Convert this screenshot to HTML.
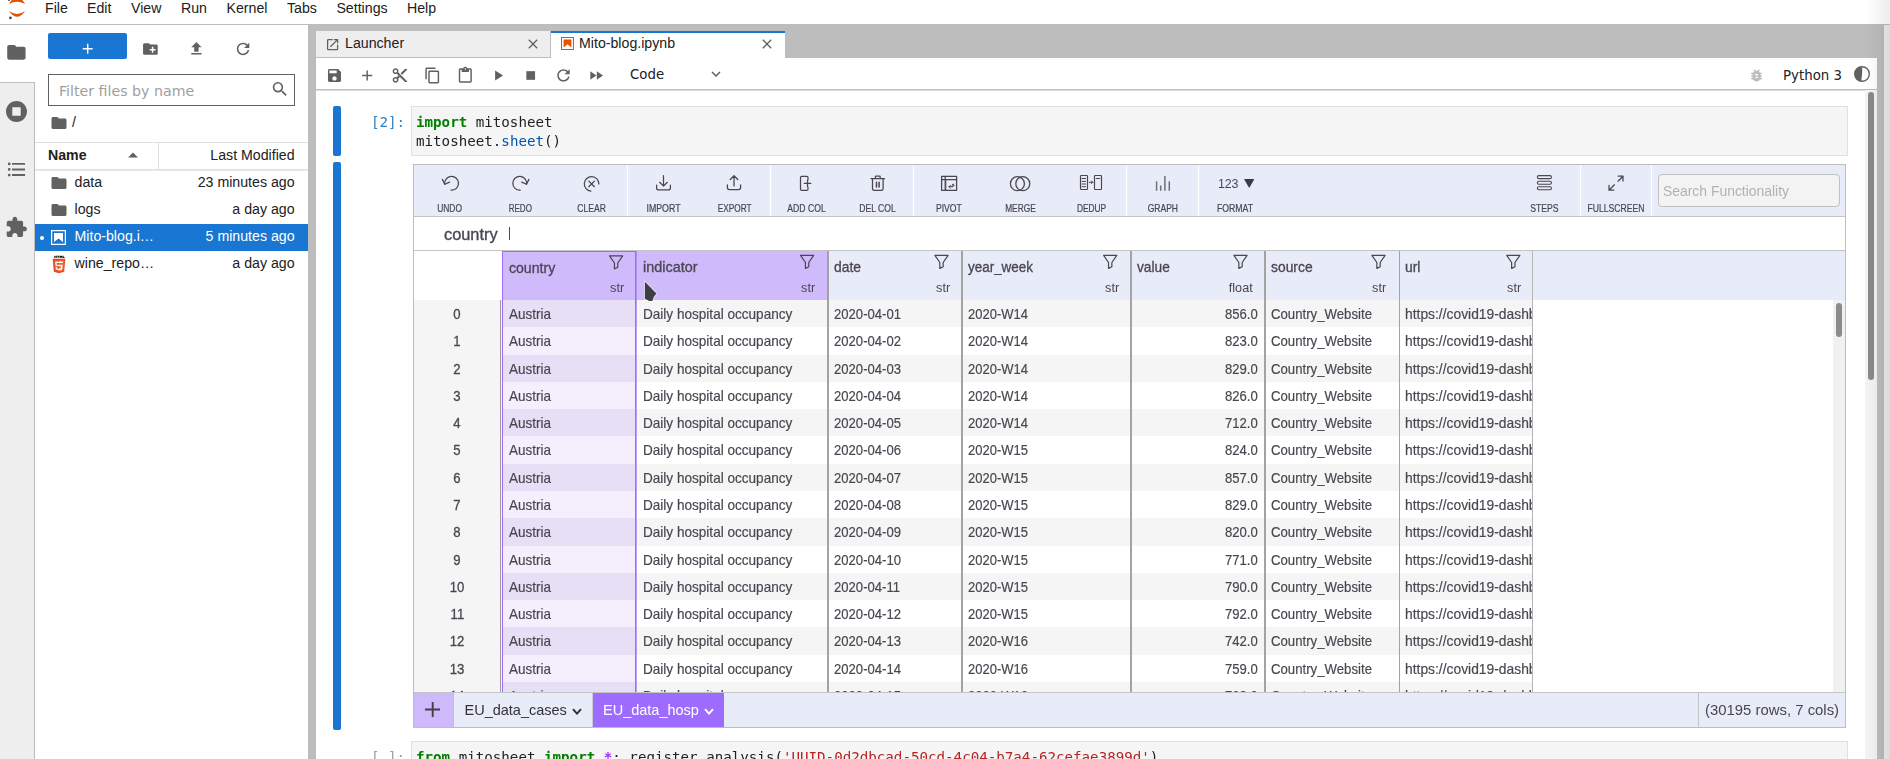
<!DOCTYPE html><html><head><meta charset="utf-8"><title>Mito-blog.ipynb - JupyterLab</title><style>
*{box-sizing:border-box;margin:0;padding:0}
html,body{width:1890px;height:759px;overflow:hidden;background:#fff}
body{position:relative;font-family:"Liberation Sans",sans-serif;font-size:14.18px;color:#212121}
.abs{position:absolute}
#menu{left:0;top:0;width:1890px;height:25px;border-bottom:1px solid #bdbdbd;background:#fff}
#menu span{position:absolute;top:-1px;line-height:18px;font-size:14.18px;color:#212121;white-space:nowrap}
#lside{left:0;top:25px;width:35px;height:734px;background:#eee;border-right:1px solid #bdbdbd}
#lside .act{position:absolute;left:0;top:0;width:35px;height:58px;background:#fff;border-bottom:1px solid #bdbdbd}
#fb{left:35px;top:25px;width:273px;height:734px;background:#fff}
#main{left:308px;top:25px;width:1582px;height:734px;background:#bdbdbd}
#rside{left:1884px;top:25px;width:6px;height:734px;background:#eee}
.tab{position:absolute;top:31px;height:26px;font-size:14.18px;line-height:24px;white-space:nowrap}
#tab1{left:316px;width:235px;background:#eee;border-right:1px solid #bdbdbd;height:26px}
#tab2{left:551px;width:234px;background:#fff;border-top:2px solid #1976d2;height:27px}
#nbpanel{left:316px;top:58px;width:1561px;height:701px;background:#fff}
#tbar{left:316px;top:58px;width:1561px;height:32px;background:#fff;border-bottom:1px solid #bdbdbd;box-shadow:0 1px 1px rgba(0,0,0,.12)}
.mono{will-change:transform;font-family:"DejaVu Sans Mono","Liberation Mono",monospace;font-size:14.18px;line-height:19.3px;white-space:pre}
.k{color:#008000;font-weight:bold}.f{color:#0055aa}.s{color:#ba2121}.o{color:#aa22ff;font-weight:bold}
.inp{position:absolute;background:#f5f5f5;border:1px solid #e0e0e0}
.coll{position:absolute;width:8px;background:#1976d2;border-radius:2px}
.prompt{position:absolute;color:#307fc1}
/* mito */
#mito{will-change:transform;left:413px;top:164px;width:1433px;height:564px;border:1px solid #bdbdbd;background:#fff;overflow:hidden}
.of{font-family:"DejaVu Sans","Liberation Sans",sans-serif;white-space:nowrap}
.tl{font-size:10.6px;line-height:12px;text-align:center;color:#494650;white-space:nowrap}
.hd{font-size:14.3px;line-height:18px;color:#494650;-webkit-text-stroke:.3px #494650;white-space:nowrap}
.ty{font-size:13.6px;line-height:16px;color:#494650;text-align:right;white-space:nowrap}
.dc{font-size:14.3px;line-height:18px;color:#494650;white-space:nowrap;-webkit-text-stroke:.18px #494650}
.sh{font-size:14.5px;line-height:18px;white-space:nowrap}
.cn{display:inline-block;transform-origin:0 50%;white-space:nowrap}
</style></head><body>
<div id="menu" class="abs">
<svg class="abs" style="left:0;top:0" width="40" height="24" viewBox="0 0 40 24"><path d="M9 3.9 Q17.05 -0.2 25.1 3.9 Q17.05 -9.7 9 3.9Z" fill="#e65100"/><path d="M9 11.1 Q17.05 16.9 25.1 11.1 Q17.05 22.6 9 11.1Z" fill="#e65100"/><circle cx="10.4" cy="17.9" r="1.4" fill="#4e4e4e"/><circle cx="9" cy="-0.1" r="1.1" fill="#4e4e4e"/></svg>
<span style="left:45px">File</span>
<span style="left:87px">Edit</span>
<span style="left:131px">View</span>
<span style="left:181px">Run</span>
<span style="left:226.5px">Kernel</span>
<span style="left:287px">Tabs</span>
<span style="left:336.4px">Settings</span>
<span style="left:407px">Help</span>
</div>
<div id="lside" class="abs"><div class="act"></div></div>
<div id="fb" class="abs"></div>
<svg class="abs" style="left:5px;top:41px" width="23" height="23" viewBox="0 0 23 23"><path transform="translate(0.40,0.30) scale(0.9167)" d="M10 4H4c-1.1 0-1.99.9-1.99 2L2 18c0 1.1.9 2 2 2h16c1.1 0 2-.9 2-2V8c0-1.1-.9-2-2-2h-8l-2-2z" fill="#616161"/></svg>
<svg class="abs" style="left:3px;top:98px" width="27" height="27" viewBox="0 0 27 27"><path transform="translate(0.90,0.90) scale(1.0500)" d="M12 2C6.48 2 2 6.48 2 12s4.48 10 10 10 10-4.48 10-10S17.52 2 12 2zm4 14H8V8h8v8z" fill="#616161"/></svg>
<svg class="abs" style="left:5px;top:158px" width="24" height="24" viewBox="0 0 24 24"><path transform="translate(0.50,0.30) scale(0.9292)" d="M7,5H21V7H7V5M7,13V11H21V13H7M4,4.5A1.5,1.5 0 0,1 5.5,6A1.5,1.5 0 0,1 4,7.5A1.5,1.5 0 0,1 2.5,6A1.5,1.5 0 0,1 4,4.5M4,10.5A1.5,1.5 0 0,1 5.5,12A1.5,1.5 0 0,1 4,13.5A1.5,1.5 0 0,1 2.5,12A1.5,1.5 0 0,1 4,10.5M7,19V17H21V19H7M4,16.5A1.5,1.5 0 0,1 5.5,18A1.5,1.5 0 0,1 4,19.5A1.5,1.5 0 0,1 2.5,18A1.5,1.5 0 0,1 4,16.5Z" fill="#616161"/></svg>
<svg class="abs" style="left:4px;top:215px" width="25" height="25" viewBox="0 0 25 25"><path transform="translate(0.80,0.90) scale(0.9625)" d="M20.5 11H19V7c0-1.1-.9-2-2-2h-4V3.5C13 2.12 11.88 1 10.5 1S8 2.12 8 3.5V5H4c-1.1 0-1.99.9-1.99 2v3.8H3.5c1.49 0 2.7 1.21 2.7 2.7s-1.21 2.7-2.7 2.7H2V20c0 1.1.9 2 2 2h3.8v-1.5c0-1.49 1.21-2.7 2.7-2.7 1.49 0 2.7 1.21 2.7 2.7V22H17c1.1 0 2-.9 2-2v-4h1.5c1.38 0 2.5-1.12 2.5-2.5S21.88 11 20.5 11z" fill="#616161"/></svg>
<div class="abs" style="left:48px;top:33px;width:79px;height:26px;background:#1976d2;border-radius:2px"></div>
<svg class="abs" style="left:79px;top:40px" width="18" height="18" viewBox="0 0 18 18"><path transform="translate(0.20,0.20) scale(0.7083)" d="M19 13h-6v6h-2v-6H5v-2h6V5h2v6h6v2z" fill="#fff"/></svg>
<svg class="abs" style="left:141px;top:40px" width="19" height="19" viewBox="0 0 19 19"><path transform="translate(0.60,0.20) scale(0.7333)" d="M20 6h-8l-2-2H4c-1.11 0-1.99.89-1.99 2L2 18c0 1.11.89 2 2 2h16c1.11 0 2-.89 2-2V8c0-1.11-.89-2-2-2zm-1 8h-3v3h-2v-3h-3v-2h3V9h2v3h3v2z" fill="#616161"/></svg>
<svg class="abs" style="left:187px;top:39px" width="19" height="19" viewBox="0 0 19 19"><path transform="translate(0.60,0.90) scale(0.7333)" d="M9 16h6v-6h4l-7-7-7 7h4zm-4 2h14v2H5z" fill="#616161"/></svg>
<svg class="abs" style="left:233px;top:39px" width="20" height="20" viewBox="0 0 20 20"><path transform="translate(0.70,0.60) scale(1.0417)" d="M9 13.5c-2.49 0-4.5-2.01-4.5-4.5S6.51 4.5 9 4.5c1.24 0 2.36.52 3.17 1.33L10 8h5V3l-1.76 1.76C12.15 3.68 10.66 3 9 3 5.69 3 3.01 5.69 3.01 9S5.69 15 9 15c2.97 0 5.43-2.16 5.9-5h-1.52c-.46 2-2.24 3.5-4.38 3.5z" fill="#616161"/></svg>
<div class="abs" style="left:48px;top:74px;width:247px;height:32px;border:1px solid #616161;background:#fff"></div>
<div class="abs of" style="left:59px;top:81px;font-size:14.1px;line-height:20px;color:#9e9e9e"><span class="cn" style="transform:scaleX(1.006)">Filter files by name</span></div>
<svg class="abs" style="left:270px;top:79px" width="21" height="21" viewBox="0 0 21 21"><path transform="translate(0.35,0.60) scale(0.8000)" d="M15.5 14h-.79l-.28-.27A6.471 6.471 0 0 0 16 9.5 6.5 6.5 0 1 0 9.5 16c1.61 0 3.09-.59 4.23-1.57l.27.28v.79l5 4.99L20.49 19l-4.99-5zm-6 0C7.01 14 5 11.99 5 9.5S7.01 5 9.5 5 14 7.01 14 9.5 11.99 14 9.5 14z" fill="#616161"/></svg>
<svg class="abs" style="left:50px;top:114px" width="19" height="19" viewBox="0 0 19 19"><path transform="translate(0.00,0.00) scale(0.7500)" d="M10 4H4c-1.1 0-1.99.9-1.99 2L2 18c0 1.1.9 2 2 2h16c1.1 0 2-.9 2-2V8c0-1.1-.9-2-2-2h-8l-2-2z" fill="#616161"/></svg>
<div class="abs" style="left:72px;top:113px;line-height:18px">/</div>
<div class="abs" style="left:35px;top:142px;width:273px;height:28px;border-top:1px solid #e0e0e0;border-bottom:1px solid #e0e0e0;box-shadow:0 1px 1px rgba(0,0,0,.08)"></div>
<div class="abs" style="left:158px;top:143px;width:1px;height:26px;background:#e0e0e0"></div>
<div class="abs" style="left:48px;top:146px;line-height:18px;font-weight:bold">Name</div>
<svg class="abs" style="left:128px;top:152px" width="10" height="6" viewBox="0 0 10 6"><path d="M0 5.5 L5 0.5 L10 5.5Z" fill="#616161"/></svg>
<div class="abs" style="left:170px;top:146px;width:124.6px;text-align:right;line-height:18px">Last Modified</div>
<svg class="abs" style="left:50px;top:174px" width="19" height="19" viewBox="0 0 19 19"><path transform="translate(0.00,0.00) scale(0.7500)" d="M10 4H4c-1.1 0-1.99.9-1.99 2L2 18c0 1.1.9 2 2 2h16c1.1 0 2-.9 2-2V8c0-1.1-.9-2-2-2h-8l-2-2z" fill="#616161"/></svg>
<div class="abs" style="left:74.5px;top:173px;line-height:18px;color:#212121">data</div>
<div class="abs" style="left:150px;top:173px;width:144.6px;text-align:right;line-height:18px;color:#212121">23 minutes ago</div>
<svg class="abs" style="left:50px;top:201px" width="19" height="19" viewBox="0 0 19 19"><path transform="translate(0.00,0.00) scale(0.7500)" d="M10 4H4c-1.1 0-1.99.9-1.99 2L2 18c0 1.1.9 2 2 2h16c1.1 0 2-.9 2-2V8c0-1.1-.9-2-2-2h-8l-2-2z" fill="#616161"/></svg>
<div class="abs" style="left:74.5px;top:200px;line-height:18px;color:#212121">logs</div>
<div class="abs" style="left:150px;top:200px;width:144.6px;text-align:right;line-height:18px;color:#212121">a day ago</div>
<div class="abs" style="left:35px;top:224px;width:273px;height:27px;background:#1976d2"></div>
<div class="abs" style="left:40px;top:236px;width:4px;height:4px;border-radius:2px;background:#fff"></div>
<svg class="abs" style="left:51px;top:230px" width="15" height="15" viewBox="1.8 1.8 18.4 18.4"><path fill="#fff" d="M18.7 3.3v15.4H3.3V3.3h15.4m1.5-1.5H1.8v18.3h18.3l.1-18.3z"/><path fill="#fff" d="M16.5 16.5l-5.4-4.3-5.6 4.3v-11h11z"/></svg>
<div class="abs" style="left:74.5px;top:227px;line-height:18px;color:#fff">Mito-blog.i…</div>
<div class="abs" style="left:150px;top:227px;width:144.6px;text-align:right;line-height:18px;color:#fff">5 minutes ago</div>
<svg class="abs" style="left:50px;top:254px" width="18" height="20" viewBox="0 0 512 512"><path fill="#e44d26" d="M108 476L76 110h360l-33 366-148 41z"/><path fill="#f16529" d="M256 486l119-33 28-313H256z"/><path fill="#ebebeb" d="M256 276h-60l-4-46h64v-45H143l1 12 11 124h101zm0 117l-50-14-3-36h-45l6 70 92 26z"/><path fill="#fff" d="M256 276v45h55l-5 58-50 14v47l92-26 1-8 11-118 1-12h-13zm0-91v45h108l1-10 2-23 1-12z"/><path fill="#000" d="M124 10h23v22h21V10h23v68h-23V55h-21v23h-23zm97 23h-20V10h63v23h-20v45h-23zm53-23h24l14 24 15-24h24v68h-23V44l-16 24-16-24v34h-22zm88 0h23v46h32v22h-55z" transform="translate(0,10)"/></svg>
<div class="abs" style="left:74.5px;top:254px;line-height:18px;color:#212121">wine_repo…</div>
<div class="abs" style="left:150px;top:254px;width:144.6px;text-align:right;line-height:18px;color:#212121">a day ago</div>
<div id="main" class="abs"></div>
<div id="rside" class="abs"></div>
<div id="tab1" class="tab"><span class="abs" style="left:29px;top:0">Launcher</span></div>
<div id="tab2" class="tab"><span class="abs" style="left:28px;top:-2px">Mito-blog.ipynb</span></div>
<div id="nbpanel" class="abs"></div>
<div id="tbar" class="abs"></div>
<svg class="abs" style="left:325px;top:37px" width="16" height="16" viewBox="0 0 16 16"><path transform="translate(0.10,0.00) scale(0.6250)" d="M19 19H5V5h7V3H5a2 2 0 0 0-2 2v14a2 2 0 0 0 2 2h14c1.1 0 2-.9 2-2v-7h-2v7zM14 3v2h3.59l-9.83 9.83 1.41 1.41L19 6.41V10h2V3h-7z" fill="#616161"/></svg>
<svg class="abs" style="left:525px;top:36px" width="17" height="17" viewBox="0 0 17 17"><path transform="translate(0.00,0.00) scale(0.6667)" d="M19 6.41L17.59 5 12 10.59 6.41 5 5 6.41 10.59 12 5 17.59 6.41 19 12 13.41 17.59 19 19 17.59 13.41 12z" fill="#616161"/></svg>
<svg class="abs" style="left:561px;top:37px" width="13" height="13" viewBox="1.8 1.8 18.4 18.4"><path fill="#e65100" d="M18.7 3.3v15.4H3.3V3.3h15.4m1.5-1.5H1.8v18.3h18.3l.1-18.3z"/><path fill="#e65100" d="M16.5 16.5l-5.4-4.3-5.6 4.3v-11h11z"/></svg>
<svg class="abs" style="left:759px;top:36px" width="17" height="17" viewBox="0 0 17 17"><path transform="translate(0.00,0.00) scale(0.6667)" d="M19 6.41L17.59 5 12 10.59 6.41 5 5 6.41 10.59 12 5 17.59 6.41 19 12 13.41 17.59 19 19 17.59 13.41 12z" fill="#616161"/></svg>
<svg class="abs" style="left:325px;top:66px" width="19" height="19" viewBox="0 0 19 19"><path transform="translate(0.80,0.80) scale(0.7250)" d="M17 3H5c-1.11 0-2 .9-2 2v14c0 1.1.89 2 2 2h14c1.1 0 2-.9 2-2V7l-4-4zm-5 16c-1.66 0-3-1.34-3-3s1.34-3 3-3 3 1.34 3 3-1.34 3-3 3zm3-10H5V5h10v4z" fill="#616161"/></svg>
<svg class="abs" style="left:358px;top:66px" width="19" height="19" viewBox="0 0 19 19"><path transform="translate(0.50,0.80) scale(0.7250)" d="M19 13h-6v6h-2v-6H5v-2h6V5h2v6h6v2z" fill="#616161"/></svg>
<svg class="abs" style="left:391px;top:66px" width="19" height="19" viewBox="0 0 19 19"><path transform="translate(0.20,0.80) scale(0.7250)" d="M9.64 7.64c.23-.5.36-1.05.36-1.64 0-2.21-1.79-4-4-4S2 3.79 2 6s1.79 4 4 4c.59 0 1.14-.13 1.64-.36L10 12l-2.36 2.36C7.14 14.13 6.59 14 6 14c-2.21 0-4 1.79-4 4s1.79 4 4 4 4-1.79 4-4c0-.59-.13-1.14-.36-1.64L12 14l7 7h3v-1L9.64 7.64zM6 8c-1.1 0-2-.89-2-2s.9-2 2-2 2 .89 2 2-.9 2-2 2zm0 12c-1.1 0-2-.89-2-2s.9-2 2-2 2 .89 2 2-.9 2-2 2zm6-7.5c-.28 0-.5-.22-.5-.5s.22-.5.5-.5.5.22.5.5-.22.5-.5.5zM19 3l-6 6 2 2 7-7V3z" fill="#616161"/></svg>
<svg class="abs" style="left:423px;top:66px" width="19" height="19" viewBox="0 0 19 19"><path transform="translate(0.90,0.80) scale(0.7250)" d="M16 1H4c-1.1 0-2 .9-2 2v14h2V3h12V1zm3 4H8c-1.1 0-2 .9-2 2v14c0 1.1.9 2 2 2h11c1.1 0 2-.9 2-2V7c0-1.1-.9-2-2-2zm0 16H8V7h11v14z" fill="#616161"/></svg>
<svg class="abs" style="left:456px;top:66px" width="19" height="19" viewBox="0 0 19 19"><path transform="translate(0.60,0.80) scale(0.7250)" d="M19 2h-4.18C14.4.84 13.3 0 12 0c-1.3 0-2.4.84-2.82 2H5c-1.1 0-2 .9-2 2v16c0 1.1.9 2 2 2h14c1.1 0 2-.9 2-2V4c0-1.1-.9-2-2-2zm-7 0c.55 0 1 .45 1 1s-.45 1-1 1-1-.45-1-1 .45-1 1-1zm7 18H5V4h2v3h10V4h2v16z" fill="#616161"/></svg>
<svg class="abs" style="left:489px;top:66px" width="19" height="19" viewBox="0 0 19 19"><path transform="translate(0.30,0.80) scale(0.7250)" d="M8 5v14l11-7z" fill="#616161"/></svg>
<svg class="abs" style="left:522px;top:66px" width="19" height="19" viewBox="0 0 19 19"><path transform="translate(0.00,0.80) scale(0.7250)" d="M6 6h12v12H6z" fill="#616161"/></svg>
<svg class="abs" style="left:554px;top:66px" width="20" height="20" viewBox="0 0 20 20"><path transform="translate(0.20,0.10) scale(1.0333)" d="M9 13.5c-2.49 0-4.5-2.01-4.5-4.5S6.51 4.5 9 4.5c1.24 0 2.36.52 3.17 1.33L10 8h5V3l-1.76 1.76C12.15 3.68 10.66 3 9 3 5.69 3 3.01 5.69 3.01 9S5.69 15 9 15c2.97 0 5.43-2.16 5.9-5h-1.52c-.46 2-2.24 3.5-4.38 3.5z" fill="#616161"/></svg>
<svg class="abs" style="left:587px;top:66px" width="19" height="19" viewBox="0 0 19 19"><path transform="translate(0.40,0.80) scale(0.7250)" d="M4 18l8.5-6L4 6v12zm9-12v12l8.5-6L13 6z" fill="#616161"/></svg>
<div class="abs of" style="left:629.5px;top:64.4px;font-size:14.1px;line-height:20px;color:#212121"><span class="cn" style="transform:scaleX(.947)">Code</span></div>
<svg class="abs" style="left:707px;top:65px" width="19" height="19" viewBox="0 0 19 19"><path transform="translate(0.00,0.00) scale(0.7500)" d="M16.59 8.59L12 13.17 7.41 8.59 6 10l6 6 6-6z" fill="#616161"/></svg>
<svg class="abs" style="left:1748px;top:67px" width="17" height="17" viewBox="0 0 17 17"><path transform="translate(0.60,0.40) scale(0.6667)" d="M20 8h-2.81a5.985 5.985 0 0 0-1.82-1.96L17 4.41 15.59 3l-2.17 2.17C12.96 5.06 12.49 5 12 5c-.49 0-.96.06-1.41.17L8.41 3 7 4.41l1.62 1.63C7.88 6.55 7.26 7.22 6.81 8H4v2h2.09c-.05.33-.09.66-.09 1v1H4v2h2v1c0 .34.04.67.09 1H4v2h2.81c1.04 1.79 2.97 3 5.19 3s4.15-1.21 5.19-3H20v-2h-2.09c.05-.33.09-.66.09-1v-1h2v-2h-2v-1c0-.34-.04-.67-.09-1H20V8zm-6 8h-4v-2h4v2zm0-4h-4v-2h4v2z" fill="#bdbdbd"/></svg>
<div class="abs of" style="left:1783px;top:65px;font-size:14.1px;line-height:20px;color:#212121"><span class="cn" style="transform:scaleX(.947)">Python 3</span></div>
<svg class="abs" style="left:1853px;top:65px" width="18" height="18" viewBox="0 0 18 18"><circle cx="9" cy="9" r="7.3" fill="#fff" stroke="#616161" stroke-width="1.4"/><path d="M9 1.7 A7.3 7.3 0 0 0 9 16.3 C7.5 15.5 10 9 9 1.7Z" fill="#616161"/></svg>
<div class="abs" style="left:1865px;top:90px;width:12px;height:669px;background:#f3f3f3"></div>
<div class="abs" style="left:1868px;top:92px;width:6px;height:288px;background:#8a8a8a;border-radius:3px"></div>
<div class="coll" style="left:333px;top:106px;height:50px"></div>
<div class="prompt mono" style="left:370.6px;top:113px">[2]:</div>
<div class="inp" style="left:411px;top:106px;width:1437px;height:50px"></div>
<div class="abs mono" style="left:416.4px;top:113px"><span class="k">import</span> mitosheet
mitosheet<span class="o" style="font-weight:normal;color:#212121">.</span><span class="f">sheet</span>()</div>
<div class="coll" style="left:333px;top:162px;height:568px"></div>
<div id="mito" class="abs"><div class="abs" style="left:0;top:0;width:1431px;height:52px;background:#e8ebf8;border-bottom:1px solid #c4c4c4"></div>
<div class="abs" style="left:213px;top:0;width:1px;height:51px;background:#fff;box-shadow:0 0 0 .25px rgba(255,255,255,.5)"></div>
<div class="abs" style="left:356px;top:0;width:1px;height:51px;background:#fff;box-shadow:0 0 0 .25px rgba(255,255,255,.5)"></div>
<div class="abs" style="left:499px;top:0;width:1px;height:51px;background:#fff;box-shadow:0 0 0 .25px rgba(255,255,255,.5)"></div>
<div class="abs" style="left:712px;top:0;width:1px;height:51px;background:#fff;box-shadow:0 0 0 .25px rgba(255,255,255,.5)"></div>
<div class="abs" style="left:784px;top:0;width:1px;height:51px;background:#fff;box-shadow:0 0 0 .25px rgba(255,255,255,.5)"></div>
<div class="abs" style="left:1166px;top:0;width:1px;height:51px;background:#fff;box-shadow:0 0 0 .25px rgba(255,255,255,.5)"></div>
<div class="abs" style="left:1237px;top:0;width:1px;height:51px;background:#fff;box-shadow:0 0 0 .25px rgba(255,255,255,.5)"></div>
<div class="abs tl" style="left:-14.0px;top:37px;width:100px"><span style="display:inline-block;transform:scaleX(0.798);-webkit-text-stroke:.2px #494650">UNDO</span></div>
<div class="abs tl" style="left:56.59999999999991px;top:37px;width:100px"><span style="display:inline-block;transform:scaleX(0.761);-webkit-text-stroke:.2px #494650">REDO</span></div>
<div class="abs tl" style="left:127.89999999999998px;top:37px;width:100px"><span style="display:inline-block;transform:scaleX(0.809);-webkit-text-stroke:.2px #494650">CLEAR</span></div>
<div class="abs tl" style="left:199.89999999999998px;top:37px;width:100px"><span style="display:inline-block;transform:scaleX(0.831);-webkit-text-stroke:.2px #494650">IMPORT</span></div>
<div class="abs tl" style="left:270.30000000000007px;top:37px;width:100px"><span style="display:inline-block;transform:scaleX(0.778);-webkit-text-stroke:.2px #494650">EXPORT</span></div>
<div class="abs tl" style="left:342.1px;top:37px;width:100px"><span style="display:inline-block;transform:scaleX(0.815);-webkit-text-stroke:.2px #494650">ADD COL</span></div>
<div class="abs tl" style="left:413.79999999999995px;top:37px;width:100px"><span style="display:inline-block;transform:scaleX(0.809);-webkit-text-stroke:.2px #494650">DEL COL</span></div>
<div class="abs tl" style="left:485.0999999999999px;top:37px;width:100px"><span style="display:inline-block;transform:scaleX(0.817);-webkit-text-stroke:.2px #494650">PIVOT</span></div>
<div class="abs tl" style="left:556.4px;top:37px;width:100px"><span style="display:inline-block;transform:scaleX(0.785);-webkit-text-stroke:.2px #494650">MERGE</span></div>
<div class="abs tl" style="left:627.6999999999998px;top:37px;width:100px"><span style="display:inline-block;transform:scaleX(0.79);-webkit-text-stroke:.2px #494650">DEDUP</span></div>
<div class="abs tl" style="left:699.0px;top:37px;width:100px"><span style="display:inline-block;transform:scaleX(0.806);-webkit-text-stroke:.2px #494650">GRAPH</span></div>
<div class="abs" style="left:803.5px;top:11px;font-size:12.8px;line-height:15px;color:#494650;letter-spacing:-.2px"><span class="cn" style="transform:scaleX(.97)">123</span></div>
<svg class="abs" style="left:829.5999999999999px;top:14px" width="10.4" height="9" viewBox="0 0 10.4 9"><path d="M0 0 H10.4 L5.2 9Z" fill="#3d3a45"/></svg>
<div class="abs tl" style="left:771.0px;top:37px;width:100px"><span style="display:inline-block;transform:scaleX(0.823);-webkit-text-stroke:.2px #494650">FORMAT</span></div>
<div class="abs tl" style="left:1080px;top:37px;width:100px"><span style="display:inline-block;transform:scaleX(0.814);-webkit-text-stroke:.2px #494650">STEPS</span></div>
<div class="abs tl" style="left:1152px;top:37px;width:100px"><span style="display:inline-block;transform:scaleX(0.812);-webkit-text-stroke:.2px #494650">FULLSCREEN</span></div>
<svg class="abs" style="left:0;top:0" width="1431" height="52" viewBox="0 0 1431 52" fill="none" stroke="#494650" stroke-width="1.25" stroke-linecap="round" stroke-linejoin="round"><g transform="translate(37.60,18.30)"><path d="M-6.83 0.96 A6.9 6.9 0 1 1 -0.48 6.88"/><path d="M-9.23 -3.94 L-6.83 0.96 L-2.03 -1.24"/></g><g transform="translate(105.70,18.30)"><g transform="scale(-1,1)"><path d="M-6.83 0.96 A6.9 6.9 0 1 1 -0.48 6.88"/><path d="M-9.23 -3.94 L-6.83 0.96 L-2.03 -1.24"/></g></g><g transform="translate(177.60,18.90)"><path d="M7.30 0.00 A7.3 7.3 0 1 0 -0.76 7.26"/><path d="M-2.8 -2.8 L2.8 2.8 M2.8 -2.8 L-2.8 2.8"/></g><g transform="translate(249.50,18.30)"><path d="M0 -7.6 V2.8 M-3.8 -1 L0 2.8 L3.8 -1"/><path d="M-6.9 1.8 V4.6 a2 2 0 0 0 2 2 H4.9 a2 2 0 0 0 2 -2 V1.8"/></g><g transform="translate(320.00,18.30)"><path d="M0 2.6 V-7.6 M-3.8 -3.8 L0 -7.6 L3.8 -3.8"/><path d="M-6.6 1.6 V4.2 a2 2 0 0 0 2 2 H4.6 a2 2 0 0 0 2 -2 V1.6"/></g><g transform="translate(390.50,18.40)"><path d="M3.5 -3.9 V-5.8 a1.2 1.2 0 0 0 -1.2 -1.2 H-2.8 a1.2 1.2 0 0 0 -1.2 1.2 V5.8 a1.2 1.2 0 0 0 1.2 1.2 H2.3 a1.2 1.2 0 0 0 1.2 -1.2 V3.9"/><path d="M-0.2 0 H6.3 M3.05 -3.25 V3.25"/></g><g transform="translate(463.80,18.30)"><path d="M-6.8 -4.7 H6.8 M-2.4 -4.7 V-6.6 a.5 .5 0 0 1 .5 -.5 H1.9 a.5 .5 0 0 1 .5 .5 V-4.7"/><path d="M-5.3 -4.7 V5.4 a1.7 1.7 0 0 0 1.7 1.7 H3.6 a1.7 1.7 0 0 0 1.7 -1.7 V-4.7"/><path d="M-1.3 -1 V3.7 M1.3 -1 V3.7" stroke-width="1.5"/></g><g transform="translate(535.10,18.30)"><rect x="-7.5" y="-6.8" width="15" height="13.8"/><path d="M-7.5 -3.7 H7.5 M-3.9 -6.8 V7" /><path d="M-3.2 -3.7 V7" stroke-width=".8"/><path d="M0 3.4 H4 V1 M0 3.4 l1.3 -1.3 M0 3.4 l1.3 1.3 M4 1 l-1.2 1.2 M4 1 l1.2 1.2" stroke-width="1"/></g><g transform="translate(606.40,18.30)"><circle cx="-3" cy=".4" r="7"/><circle cx="2.4" cy=".4" r="7"/></g><g transform="translate(677.00,18.00)"><g stroke-width="1.15"><rect x="-10.5" y="-7.5" width="7" height="14" rx=".8"/><path d="M-9 -4.5 H-5.4 M-9 -1.6 H-5.4 M-9 1 H-5.4 M-9 3.7 H-5.4" stroke-width="1"/><path d="M-1.7 -.7 H1.8 M.5 -2 L1.8 -.7 L.5 .6" stroke-width="1"/><rect x="3.5" y="-7.5" width="7" height="14" rx=".8"/><path d="M5.2 -4.5 H8.8" stroke-width="1"/></g></g><g transform="translate(741.00,9.00)"><path d="M1.6 7.2 V16.8 M5.7 11.5 V16.8 M9.9 2 V16.8 M14.3 7.2 V16.8" stroke="#716f78" stroke-width="1.5" stroke-linecap="butt"/></g><g transform="translate(1130.40,17.70)"><g stroke-width="1.1"><rect x="-7.05" y="-7.05" width="14.1" height="3" rx="1.5"/><rect x="-7.05" y="-1.5" width="14.1" height="3" rx="1.5"/><rect x="-7.05" y="4.05" width="14.1" height="3" rx="1.5"/></g></g><g transform="translate(1202.00,18.20)"><path d="M-1.6 1.6 L-7 7 M-7 2.2 V7 H-2.2 M2 -2 L7 -7 M2.2 -7 H7 V-2.2" /></g></svg>
<div class="abs" style="left:1244px;top:9px;width:182px;height:33px;border:1px solid #c0c0c0;border-radius:4px;background:#f3f3f3"></div>
<div class="abs" style="left:1249.4px;top:16px;font-size:15px;line-height:20px;color:#b2b2b2"><span class="cn" style="transform:scaleX(.927)">Search Functionality</span></div>
<div class="abs" style="left:0;top:53px;width:1431px;height:33px;background:#fff;border-bottom:1px solid #c4c4c4"></div>
<div class="abs" style="left:30px;top:59px;font-size:16.5px;line-height:20px;color:#494650;-webkit-text-stroke:.35px #494650"><span class="cn" style="transform:scaleX(.99)">country</span></div>
<div class="abs" style="left:95px;top:62px;width:1px;height:13px;background:#494650"></div>
<div class="abs" style="left:0;top:86px;width:88px;height:49px;background:#fff"></div>
<div class="abs" style="left:88px;top:86px;width:1343px;height:49px;background:#e8ebf8"></div>
<div class="abs" style="left:0;top:135.00px;width:1118px;height:27.58px;background:#f5f5f5"></div>
<div class="abs" style="left:88px;top:135.00px;width:134px;height:27.58px;background:#e7dff5"></div>
<div class="abs" style="left:0;top:162.28px;width:1118px;height:27.58px;background:#fff"></div>
<div class="abs" style="left:88px;top:162.28px;width:134px;height:27.58px;background:#f5effd"></div>
<div class="abs" style="left:0;top:189.56px;width:1118px;height:27.58px;background:#f5f5f5"></div>
<div class="abs" style="left:88px;top:189.56px;width:134px;height:27.58px;background:#e7dff5"></div>
<div class="abs" style="left:0;top:216.84px;width:1118px;height:27.58px;background:#fff"></div>
<div class="abs" style="left:88px;top:216.84px;width:134px;height:27.58px;background:#f5effd"></div>
<div class="abs" style="left:0;top:244.12px;width:1118px;height:27.58px;background:#f5f5f5"></div>
<div class="abs" style="left:88px;top:244.12px;width:134px;height:27.58px;background:#e7dff5"></div>
<div class="abs" style="left:0;top:271.40px;width:1118px;height:27.58px;background:#fff"></div>
<div class="abs" style="left:88px;top:271.40px;width:134px;height:27.58px;background:#f5effd"></div>
<div class="abs" style="left:0;top:298.68px;width:1118px;height:27.58px;background:#f5f5f5"></div>
<div class="abs" style="left:88px;top:298.68px;width:134px;height:27.58px;background:#e7dff5"></div>
<div class="abs" style="left:0;top:325.96px;width:1118px;height:27.58px;background:#fff"></div>
<div class="abs" style="left:88px;top:325.96px;width:134px;height:27.58px;background:#f5effd"></div>
<div class="abs" style="left:0;top:353.24px;width:1118px;height:27.58px;background:#f5f5f5"></div>
<div class="abs" style="left:88px;top:353.24px;width:134px;height:27.58px;background:#e7dff5"></div>
<div class="abs" style="left:0;top:380.52px;width:1118px;height:27.58px;background:#fff"></div>
<div class="abs" style="left:88px;top:380.52px;width:134px;height:27.58px;background:#f5effd"></div>
<div class="abs" style="left:0;top:407.80px;width:1118px;height:27.58px;background:#f5f5f5"></div>
<div class="abs" style="left:88px;top:407.80px;width:134px;height:27.58px;background:#e7dff5"></div>
<div class="abs" style="left:0;top:435.08px;width:1118px;height:27.58px;background:#fff"></div>
<div class="abs" style="left:88px;top:435.08px;width:134px;height:27.58px;background:#f5effd"></div>
<div class="abs" style="left:0;top:462.36px;width:1118px;height:27.58px;background:#f5f5f5"></div>
<div class="abs" style="left:88px;top:462.36px;width:134px;height:27.58px;background:#e7dff5"></div>
<div class="abs" style="left:0;top:489.64px;width:1118px;height:27.58px;background:#fff"></div>
<div class="abs" style="left:88px;top:489.64px;width:134px;height:27.58px;background:#f5effd"></div>
<div class="abs" style="left:0;top:516.92px;width:1118px;height:27.58px;background:#f5f5f5"></div>
<div class="abs" style="left:88px;top:516.92px;width:134px;height:27.58px;background:#e7dff5"></div>
<div class="abs" style="left:0;top:135px;width:88px;height:393px;background:#f5f5f5"></div>
<div class="abs" style="left:88px;top:86px;width:325px;height:49px;background:#cfbafc"></div>
<div class="abs hd" style="left:94.7px;top:94px"><span class="cn" style="transform:scaleX(0.985)">country</span></div>
<div class="abs ty" style="left:160.0px;top:115.19999999999999px;width:50px"><span class="cn" style="transform:scaleX(.93);transform-origin:100% 50%">str</span></div>
<div class="abs hd" style="left:228.7px;top:93px"><span class="cn" style="transform:scaleX(1.01)">indicator</span></div>
<div class="abs ty" style="left:351.5px;top:114.6px;width:50px"><span class="cn" style="transform:scaleX(.93);transform-origin:100% 50%">str</span></div>
<div class="abs hd" style="left:420.2px;top:93px"><span class="cn" style="transform:scaleX(0.97)">date</span></div>
<div class="abs ty" style="left:486.0px;top:114.6px;width:50px"><span class="cn" style="transform:scaleX(.93);transform-origin:100% 50%">str</span></div>
<div class="abs hd" style="left:554.2px;top:93px"><span class="cn" style="transform:scaleX(0.94)">year_week</span></div>
<div class="abs ty" style="left:655.5px;top:114.6px;width:50px"><span class="cn" style="transform:scaleX(.93);transform-origin:100% 50%">str</span></div>
<div class="abs hd" style="left:723.2px;top:93px"><span class="cn" style="transform:scaleX(0.96)">value</span></div>
<div class="abs ty" style="left:788.8px;top:114.6px;width:50px"><span class="cn" style="transform:scaleX(.93);transform-origin:100% 50%">float</span></div>
<div class="abs hd" style="left:857.2px;top:93px"><span class="cn" style="transform:scaleX(0.97)">source</span></div>
<div class="abs ty" style="left:922.5px;top:114.6px;width:50px"><span class="cn" style="transform:scaleX(.93);transform-origin:100% 50%">str</span></div>
<div class="abs hd" style="left:991.2px;top:93px"><span class="cn" style="transform:scaleX(0.97)">url</span></div>
<div class="abs ty" style="left:1057.5px;top:114.6px;width:50px"><span class="cn" style="transform:scaleX(.93);transform-origin:100% 50%">str</span></div>
<svg class="abs" style="left:0;top:86px" width="1431" height="49" viewBox="0 0 1431 49"><g transform="translate(194.80,4.1) scale(1.043)"><path d="M.7 .7 H13.3 L8.6 7.6 V11.6 L5.4 13.2 V7.6 Z" fill="none" stroke="#494650" stroke-width="1.15" stroke-linejoin="round"/></g><g transform="translate(385.80,3.6) scale(1.043)"><path d="M.7 .7 H13.3 L8.6 7.6 V11.6 L5.4 13.2 V7.6 Z" fill="none" stroke="#494650" stroke-width="1.15" stroke-linejoin="round"/></g><g transform="translate(520.20,3.6) scale(1.043)"><path d="M.7 .7 H13.3 L8.6 7.6 V11.6 L5.4 13.2 V7.6 Z" fill="none" stroke="#494650" stroke-width="1.15" stroke-linejoin="round"/></g><g transform="translate(688.90,3.6) scale(1.043)"><path d="M.7 .7 H13.3 L8.6 7.6 V11.6 L5.4 13.2 V7.6 Z" fill="none" stroke="#494650" stroke-width="1.15" stroke-linejoin="round"/></g><g transform="translate(819.20,3.6) scale(1.043)"><path d="M.7 .7 H13.3 L8.6 7.6 V11.6 L5.4 13.2 V7.6 Z" fill="none" stroke="#494650" stroke-width="1.15" stroke-linejoin="round"/></g><g transform="translate(957.20,3.6) scale(1.043)"><path d="M.7 .7 H13.3 L8.6 7.6 V11.6 L5.4 13.2 V7.6 Z" fill="none" stroke="#494650" stroke-width="1.15" stroke-linejoin="round"/></g><g transform="translate(1092.00,3.6) scale(1.043)"><path d="M.7 .7 H13.3 L8.6 7.6 V11.6 L5.4 13.2 V7.6 Z" fill="none" stroke="#494650" stroke-width="1.15" stroke-linejoin="round"/></g></svg>
<div class="abs dc" style="left:0;top:140.05px;width:86px;text-align:center;-webkit-text-stroke:.3px #494650"><span style="display:inline-block;transform:scaleX(.92)">0</span></div>
<div class="abs dc" style="left:95.0px;top:140.05px;"><span class="cn" style="transform:scaleX(0.944)">Austria</span></div>
<div class="abs dc" style="left:229.3px;top:140.05px;"><span class="cn" style="transform:scaleX(0.949)">Daily hospital occupancy</span></div>
<div class="abs dc" style="left:420.3px;top:140.05px;"><span class="cn" style="transform:scaleX(0.916)">2020-04-01</span></div>
<div class="abs dc" style="left:554.3px;top:140.05px;"><span class="cn" style="transform:scaleX(0.908)">2020-W14</span></div>
<div class="abs dc" style="left:743.6px;top:140.05px;width:100px;text-align:right"><span class="cn" style="transform:scaleX(0.917);transform-origin:100% 50%">856.0</span></div>
<div class="abs dc" style="left:857.3px;top:140.05px;"><span class="cn" style="transform:scaleX(0.923)">Country_Website</span></div>
<div class="abs dc" style="left:991.0px;top:140.05px;width:126.5px;overflow:hidden;"><span class="cn" style="transform:scaleX(0.968)">https://covid19-dashboard.ages.at/</span></div>
<div class="abs dc" style="left:0;top:167.33px;width:86px;text-align:center;-webkit-text-stroke:.3px #494650"><span style="display:inline-block;transform:scaleX(.92)">1</span></div>
<div class="abs dc" style="left:95.0px;top:167.33px;"><span class="cn" style="transform:scaleX(0.944)">Austria</span></div>
<div class="abs dc" style="left:229.3px;top:167.33px;"><span class="cn" style="transform:scaleX(0.949)">Daily hospital occupancy</span></div>
<div class="abs dc" style="left:420.3px;top:167.33px;"><span class="cn" style="transform:scaleX(0.916)">2020-04-02</span></div>
<div class="abs dc" style="left:554.3px;top:167.33px;"><span class="cn" style="transform:scaleX(0.908)">2020-W14</span></div>
<div class="abs dc" style="left:743.6px;top:167.33px;width:100px;text-align:right"><span class="cn" style="transform:scaleX(0.917);transform-origin:100% 50%">823.0</span></div>
<div class="abs dc" style="left:857.3px;top:167.33px;"><span class="cn" style="transform:scaleX(0.923)">Country_Website</span></div>
<div class="abs dc" style="left:991.0px;top:167.33px;width:126.5px;overflow:hidden;"><span class="cn" style="transform:scaleX(0.968)">https://covid19-dashboard.ages.at/</span></div>
<div class="abs dc" style="left:0;top:194.61px;width:86px;text-align:center;-webkit-text-stroke:.3px #494650"><span style="display:inline-block;transform:scaleX(.92)">2</span></div>
<div class="abs dc" style="left:95.0px;top:194.61px;"><span class="cn" style="transform:scaleX(0.944)">Austria</span></div>
<div class="abs dc" style="left:229.3px;top:194.61px;"><span class="cn" style="transform:scaleX(0.949)">Daily hospital occupancy</span></div>
<div class="abs dc" style="left:420.3px;top:194.61px;"><span class="cn" style="transform:scaleX(0.916)">2020-04-03</span></div>
<div class="abs dc" style="left:554.3px;top:194.61px;"><span class="cn" style="transform:scaleX(0.908)">2020-W14</span></div>
<div class="abs dc" style="left:743.6px;top:194.61px;width:100px;text-align:right"><span class="cn" style="transform:scaleX(0.917);transform-origin:100% 50%">829.0</span></div>
<div class="abs dc" style="left:857.3px;top:194.61px;"><span class="cn" style="transform:scaleX(0.923)">Country_Website</span></div>
<div class="abs dc" style="left:991.0px;top:194.61px;width:126.5px;overflow:hidden;"><span class="cn" style="transform:scaleX(0.968)">https://covid19-dashboard.ages.at/</span></div>
<div class="abs dc" style="left:0;top:221.89px;width:86px;text-align:center;-webkit-text-stroke:.3px #494650"><span style="display:inline-block;transform:scaleX(.92)">3</span></div>
<div class="abs dc" style="left:95.0px;top:221.89px;"><span class="cn" style="transform:scaleX(0.944)">Austria</span></div>
<div class="abs dc" style="left:229.3px;top:221.89px;"><span class="cn" style="transform:scaleX(0.949)">Daily hospital occupancy</span></div>
<div class="abs dc" style="left:420.3px;top:221.89px;"><span class="cn" style="transform:scaleX(0.916)">2020-04-04</span></div>
<div class="abs dc" style="left:554.3px;top:221.89px;"><span class="cn" style="transform:scaleX(0.908)">2020-W14</span></div>
<div class="abs dc" style="left:743.6px;top:221.89px;width:100px;text-align:right"><span class="cn" style="transform:scaleX(0.917);transform-origin:100% 50%">826.0</span></div>
<div class="abs dc" style="left:857.3px;top:221.89px;"><span class="cn" style="transform:scaleX(0.923)">Country_Website</span></div>
<div class="abs dc" style="left:991.0px;top:221.89px;width:126.5px;overflow:hidden;"><span class="cn" style="transform:scaleX(0.968)">https://covid19-dashboard.ages.at/</span></div>
<div class="abs dc" style="left:0;top:249.17px;width:86px;text-align:center;-webkit-text-stroke:.3px #494650"><span style="display:inline-block;transform:scaleX(.92)">4</span></div>
<div class="abs dc" style="left:95.0px;top:249.17px;"><span class="cn" style="transform:scaleX(0.944)">Austria</span></div>
<div class="abs dc" style="left:229.3px;top:249.17px;"><span class="cn" style="transform:scaleX(0.949)">Daily hospital occupancy</span></div>
<div class="abs dc" style="left:420.3px;top:249.17px;"><span class="cn" style="transform:scaleX(0.916)">2020-04-05</span></div>
<div class="abs dc" style="left:554.3px;top:249.17px;"><span class="cn" style="transform:scaleX(0.908)">2020-W14</span></div>
<div class="abs dc" style="left:743.6px;top:249.17px;width:100px;text-align:right"><span class="cn" style="transform:scaleX(0.917);transform-origin:100% 50%">712.0</span></div>
<div class="abs dc" style="left:857.3px;top:249.17px;"><span class="cn" style="transform:scaleX(0.923)">Country_Website</span></div>
<div class="abs dc" style="left:991.0px;top:249.17px;width:126.5px;overflow:hidden;"><span class="cn" style="transform:scaleX(0.968)">https://covid19-dashboard.ages.at/</span></div>
<div class="abs dc" style="left:0;top:276.45px;width:86px;text-align:center;-webkit-text-stroke:.3px #494650"><span style="display:inline-block;transform:scaleX(.92)">5</span></div>
<div class="abs dc" style="left:95.0px;top:276.45px;"><span class="cn" style="transform:scaleX(0.944)">Austria</span></div>
<div class="abs dc" style="left:229.3px;top:276.45px;"><span class="cn" style="transform:scaleX(0.949)">Daily hospital occupancy</span></div>
<div class="abs dc" style="left:420.3px;top:276.45px;"><span class="cn" style="transform:scaleX(0.916)">2020-04-06</span></div>
<div class="abs dc" style="left:554.3px;top:276.45px;"><span class="cn" style="transform:scaleX(0.908)">2020-W15</span></div>
<div class="abs dc" style="left:743.6px;top:276.45px;width:100px;text-align:right"><span class="cn" style="transform:scaleX(0.917);transform-origin:100% 50%">824.0</span></div>
<div class="abs dc" style="left:857.3px;top:276.45px;"><span class="cn" style="transform:scaleX(0.923)">Country_Website</span></div>
<div class="abs dc" style="left:991.0px;top:276.45px;width:126.5px;overflow:hidden;"><span class="cn" style="transform:scaleX(0.968)">https://covid19-dashboard.ages.at/</span></div>
<div class="abs dc" style="left:0;top:303.73px;width:86px;text-align:center;-webkit-text-stroke:.3px #494650"><span style="display:inline-block;transform:scaleX(.92)">6</span></div>
<div class="abs dc" style="left:95.0px;top:303.73px;"><span class="cn" style="transform:scaleX(0.944)">Austria</span></div>
<div class="abs dc" style="left:229.3px;top:303.73px;"><span class="cn" style="transform:scaleX(0.949)">Daily hospital occupancy</span></div>
<div class="abs dc" style="left:420.3px;top:303.73px;"><span class="cn" style="transform:scaleX(0.916)">2020-04-07</span></div>
<div class="abs dc" style="left:554.3px;top:303.73px;"><span class="cn" style="transform:scaleX(0.908)">2020-W15</span></div>
<div class="abs dc" style="left:743.6px;top:303.73px;width:100px;text-align:right"><span class="cn" style="transform:scaleX(0.917);transform-origin:100% 50%">857.0</span></div>
<div class="abs dc" style="left:857.3px;top:303.73px;"><span class="cn" style="transform:scaleX(0.923)">Country_Website</span></div>
<div class="abs dc" style="left:991.0px;top:303.73px;width:126.5px;overflow:hidden;"><span class="cn" style="transform:scaleX(0.968)">https://covid19-dashboard.ages.at/</span></div>
<div class="abs dc" style="left:0;top:331.01px;width:86px;text-align:center;-webkit-text-stroke:.3px #494650"><span style="display:inline-block;transform:scaleX(.92)">7</span></div>
<div class="abs dc" style="left:95.0px;top:331.01px;"><span class="cn" style="transform:scaleX(0.944)">Austria</span></div>
<div class="abs dc" style="left:229.3px;top:331.01px;"><span class="cn" style="transform:scaleX(0.949)">Daily hospital occupancy</span></div>
<div class="abs dc" style="left:420.3px;top:331.01px;"><span class="cn" style="transform:scaleX(0.916)">2020-04-08</span></div>
<div class="abs dc" style="left:554.3px;top:331.01px;"><span class="cn" style="transform:scaleX(0.908)">2020-W15</span></div>
<div class="abs dc" style="left:743.6px;top:331.01px;width:100px;text-align:right"><span class="cn" style="transform:scaleX(0.917);transform-origin:100% 50%">829.0</span></div>
<div class="abs dc" style="left:857.3px;top:331.01px;"><span class="cn" style="transform:scaleX(0.923)">Country_Website</span></div>
<div class="abs dc" style="left:991.0px;top:331.01px;width:126.5px;overflow:hidden;"><span class="cn" style="transform:scaleX(0.968)">https://covid19-dashboard.ages.at/</span></div>
<div class="abs dc" style="left:0;top:358.29px;width:86px;text-align:center;-webkit-text-stroke:.3px #494650"><span style="display:inline-block;transform:scaleX(.92)">8</span></div>
<div class="abs dc" style="left:95.0px;top:358.29px;"><span class="cn" style="transform:scaleX(0.944)">Austria</span></div>
<div class="abs dc" style="left:229.3px;top:358.29px;"><span class="cn" style="transform:scaleX(0.949)">Daily hospital occupancy</span></div>
<div class="abs dc" style="left:420.3px;top:358.29px;"><span class="cn" style="transform:scaleX(0.916)">2020-04-09</span></div>
<div class="abs dc" style="left:554.3px;top:358.29px;"><span class="cn" style="transform:scaleX(0.908)">2020-W15</span></div>
<div class="abs dc" style="left:743.6px;top:358.29px;width:100px;text-align:right"><span class="cn" style="transform:scaleX(0.917);transform-origin:100% 50%">820.0</span></div>
<div class="abs dc" style="left:857.3px;top:358.29px;"><span class="cn" style="transform:scaleX(0.923)">Country_Website</span></div>
<div class="abs dc" style="left:991.0px;top:358.29px;width:126.5px;overflow:hidden;"><span class="cn" style="transform:scaleX(0.968)">https://covid19-dashboard.ages.at/</span></div>
<div class="abs dc" style="left:0;top:385.57px;width:86px;text-align:center;-webkit-text-stroke:.3px #494650"><span style="display:inline-block;transform:scaleX(.92)">9</span></div>
<div class="abs dc" style="left:95.0px;top:385.57px;"><span class="cn" style="transform:scaleX(0.944)">Austria</span></div>
<div class="abs dc" style="left:229.3px;top:385.57px;"><span class="cn" style="transform:scaleX(0.949)">Daily hospital occupancy</span></div>
<div class="abs dc" style="left:420.3px;top:385.57px;"><span class="cn" style="transform:scaleX(0.916)">2020-04-10</span></div>
<div class="abs dc" style="left:554.3px;top:385.57px;"><span class="cn" style="transform:scaleX(0.908)">2020-W15</span></div>
<div class="abs dc" style="left:743.6px;top:385.57px;width:100px;text-align:right"><span class="cn" style="transform:scaleX(0.917);transform-origin:100% 50%">771.0</span></div>
<div class="abs dc" style="left:857.3px;top:385.57px;"><span class="cn" style="transform:scaleX(0.923)">Country_Website</span></div>
<div class="abs dc" style="left:991.0px;top:385.57px;width:126.5px;overflow:hidden;"><span class="cn" style="transform:scaleX(0.968)">https://covid19-dashboard.ages.at/</span></div>
<div class="abs dc" style="left:0;top:412.85px;width:86px;text-align:center;-webkit-text-stroke:.3px #494650"><span style="display:inline-block;transform:scaleX(.92)">10</span></div>
<div class="abs dc" style="left:95.0px;top:412.85px;"><span class="cn" style="transform:scaleX(0.944)">Austria</span></div>
<div class="abs dc" style="left:229.3px;top:412.85px;"><span class="cn" style="transform:scaleX(0.949)">Daily hospital occupancy</span></div>
<div class="abs dc" style="left:420.3px;top:412.85px;"><span class="cn" style="transform:scaleX(0.916)">2020-04-11</span></div>
<div class="abs dc" style="left:554.3px;top:412.85px;"><span class="cn" style="transform:scaleX(0.908)">2020-W15</span></div>
<div class="abs dc" style="left:743.6px;top:412.85px;width:100px;text-align:right"><span class="cn" style="transform:scaleX(0.917);transform-origin:100% 50%">790.0</span></div>
<div class="abs dc" style="left:857.3px;top:412.85px;"><span class="cn" style="transform:scaleX(0.923)">Country_Website</span></div>
<div class="abs dc" style="left:991.0px;top:412.85px;width:126.5px;overflow:hidden;"><span class="cn" style="transform:scaleX(0.968)">https://covid19-dashboard.ages.at/</span></div>
<div class="abs dc" style="left:0;top:440.13px;width:86px;text-align:center;-webkit-text-stroke:.3px #494650"><span style="display:inline-block;transform:scaleX(.92)">11</span></div>
<div class="abs dc" style="left:95.0px;top:440.13px;"><span class="cn" style="transform:scaleX(0.944)">Austria</span></div>
<div class="abs dc" style="left:229.3px;top:440.13px;"><span class="cn" style="transform:scaleX(0.949)">Daily hospital occupancy</span></div>
<div class="abs dc" style="left:420.3px;top:440.13px;"><span class="cn" style="transform:scaleX(0.916)">2020-04-12</span></div>
<div class="abs dc" style="left:554.3px;top:440.13px;"><span class="cn" style="transform:scaleX(0.908)">2020-W15</span></div>
<div class="abs dc" style="left:743.6px;top:440.13px;width:100px;text-align:right"><span class="cn" style="transform:scaleX(0.917);transform-origin:100% 50%">792.0</span></div>
<div class="abs dc" style="left:857.3px;top:440.13px;"><span class="cn" style="transform:scaleX(0.923)">Country_Website</span></div>
<div class="abs dc" style="left:991.0px;top:440.13px;width:126.5px;overflow:hidden;"><span class="cn" style="transform:scaleX(0.968)">https://covid19-dashboard.ages.at/</span></div>
<div class="abs dc" style="left:0;top:467.41px;width:86px;text-align:center;-webkit-text-stroke:.3px #494650"><span style="display:inline-block;transform:scaleX(.92)">12</span></div>
<div class="abs dc" style="left:95.0px;top:467.41px;"><span class="cn" style="transform:scaleX(0.944)">Austria</span></div>
<div class="abs dc" style="left:229.3px;top:467.41px;"><span class="cn" style="transform:scaleX(0.949)">Daily hospital occupancy</span></div>
<div class="abs dc" style="left:420.3px;top:467.41px;"><span class="cn" style="transform:scaleX(0.916)">2020-04-13</span></div>
<div class="abs dc" style="left:554.3px;top:467.41px;"><span class="cn" style="transform:scaleX(0.908)">2020-W16</span></div>
<div class="abs dc" style="left:743.6px;top:467.41px;width:100px;text-align:right"><span class="cn" style="transform:scaleX(0.917);transform-origin:100% 50%">742.0</span></div>
<div class="abs dc" style="left:857.3px;top:467.41px;"><span class="cn" style="transform:scaleX(0.923)">Country_Website</span></div>
<div class="abs dc" style="left:991.0px;top:467.41px;width:126.5px;overflow:hidden;"><span class="cn" style="transform:scaleX(0.968)">https://covid19-dashboard.ages.at/</span></div>
<div class="abs dc" style="left:0;top:494.69px;width:86px;text-align:center;-webkit-text-stroke:.3px #494650"><span style="display:inline-block;transform:scaleX(.92)">13</span></div>
<div class="abs dc" style="left:95.0px;top:494.69px;"><span class="cn" style="transform:scaleX(0.944)">Austria</span></div>
<div class="abs dc" style="left:229.3px;top:494.69px;"><span class="cn" style="transform:scaleX(0.949)">Daily hospital occupancy</span></div>
<div class="abs dc" style="left:420.3px;top:494.69px;"><span class="cn" style="transform:scaleX(0.916)">2020-04-14</span></div>
<div class="abs dc" style="left:554.3px;top:494.69px;"><span class="cn" style="transform:scaleX(0.908)">2020-W16</span></div>
<div class="abs dc" style="left:743.6px;top:494.69px;width:100px;text-align:right"><span class="cn" style="transform:scaleX(0.917);transform-origin:100% 50%">759.0</span></div>
<div class="abs dc" style="left:857.3px;top:494.69px;"><span class="cn" style="transform:scaleX(0.923)">Country_Website</span></div>
<div class="abs dc" style="left:991.0px;top:494.69px;width:126.5px;overflow:hidden;"><span class="cn" style="transform:scaleX(0.968)">https://covid19-dashboard.ages.at/</span></div>
<div class="abs dc" style="left:0;top:521.97px;width:86px;text-align:center;-webkit-text-stroke:.3px #494650"><span style="display:inline-block;transform:scaleX(.92)">14</span></div>
<div class="abs dc" style="left:95.0px;top:521.97px;"><span class="cn" style="transform:scaleX(0.944)">Austria</span></div>
<div class="abs dc" style="left:229.3px;top:521.97px;"><span class="cn" style="transform:scaleX(0.949)">Daily hospital occupancy</span></div>
<div class="abs dc" style="left:420.3px;top:521.97px;"><span class="cn" style="transform:scaleX(0.916)">2020-04-15</span></div>
<div class="abs dc" style="left:554.3px;top:521.97px;"><span class="cn" style="transform:scaleX(0.908)">2020-W16</span></div>
<div class="abs dc" style="left:743.6px;top:521.97px;width:100px;text-align:right"><span class="cn" style="transform:scaleX(0.917);transform-origin:100% 50%">768.0</span></div>
<div class="abs dc" style="left:857.3px;top:521.97px;"><span class="cn" style="transform:scaleX(0.923)">Country_Website</span></div>
<div class="abs dc" style="left:991.0px;top:521.97px;width:126.5px;overflow:hidden;"><span class="cn" style="transform:scaleX(0.968)">https://covid19-dashboard.ages.at/</span></div>
<div class="abs" style="left:86px;top:135px;width:1px;height:400px;background:#9e9e9e"></div>
<div class="abs" style="left:413.2px;top:86px;width:1.6px;height:450px;background:#a3a3a3"></div>
<div class="abs" style="left:547.2px;top:86px;width:1.6px;height:450px;background:#a3a3a3"></div>
<div class="abs" style="left:716.2px;top:86px;width:1.6px;height:450px;background:#a3a3a3"></div>
<div class="abs" style="left:850.2px;top:86px;width:1.6px;height:450px;background:#a3a3a3"></div>
<div class="abs" style="left:984.5px;top:86px;width:1.6px;height:450px;background:#a3a3a3"></div>
<div class="abs" style="left:1118px;top:86px;width:1px;height:450px;background:#b5b5b5"></div>
<div class="abs" style="left:88px;top:86px;width:134px;height:450px;border:1px solid #9d6cff;border-bottom:none;box-shadow:.7px 0 0 #a37af7"></div>
<div class="abs" style="left:1419px;top:135px;width:12px;height:393px;background:#f0f1f3"></div>
<div class="abs" style="left:1422px;top:137.60000000000002px;width:6px;height:34.5px;background:#8b8b8d;border-radius:3px"></div>
<svg class="abs" style="left:228px;top:114px" width="20" height="28" viewBox="0 0 20 28"><path transform="translate(2.9,2.7)" d="M0 0 V17 L4.4 19.2 L7.5 19.3 L8.8 15.2 L11.5 11.9 Z" fill="#403e45" stroke="rgba(255,255,255,.55)" stroke-width="1.8" stroke-linejoin="round" paint-order="stroke"/></svg>
<div class="abs" style="left:0;top:527px;width:1431px;height:36px;background:#e8ebf8;border-top:1px solid #c4c4c4"></div>
<div class="abs" style="left:0;top:528px;width:39.5px;height:34px;background:#cdb9fb;border-right:1px solid #bfc0cc"></div>
<svg class="abs" style="left:11px;top:537px" width="15.4" height="15" viewBox="0 0 15.4 15"><path d="M7.7 0 V15 M0 7.5 H15.4" stroke="#444049" stroke-width="1.9"/></svg>
<div class="abs" style="left:178px;top:528px;width:1px;height:34px;background:#c9cad6"></div>
<div class="abs sh" style="left:50.5px;top:536px;color:#343239">EU_data_cases</div>
<svg class="abs" style="left:157.5px;top:542.6px" width="10" height="7.6" viewBox="0 0 10 7.6"><path d="M1 1.2 L5 5.6 L9 1.2" stroke="#343239" stroke-width="2" fill="none"/></svg>
<div class="abs" style="left:179px;top:528px;width:131px;height:34px;background:#9d6cff"></div>
<div class="abs sh" style="left:189px;top:536px;color:#fff">EU_data_hosp</div>
<svg class="abs" style="left:289.5px;top:542.6px" width="10" height="7.6" viewBox="0 0 10 7.6"><path d="M1 1.2 L5 5.6 L9 1.2" stroke="#fff" stroke-width="2" fill="none"/></svg>
<div class="abs" style="left:1284px;top:528px;width:1px;height:34px;background:#c4c4c4"></div>
<div class="abs sh" style="left:1291px;top:536px;color:#494650;font-size:14.9px">(30195 rows, 7 cols)</div></div>
<div class="inp" style="left:411px;top:741px;width:1437px;height:30px"></div>
<div class="abs mono" style="left:416.4px;top:748px"><span class="k">from</span> mitosheet <span class="k">import</span> <span class="o">*</span>; register_analysis(<span class="s">'UUID-0d2dbcad-50cd-4c04-b7a4-62cefae3899d'</span>)</div>
<div class="prompt mono" style="left:370.6px;top:748px;color:#9e9e9e">[ ]:</div>
<div class="abs" style="left:1866px;top:0;width:24px;height:759px;background:linear-gradient(to right,rgba(0,0,0,0),rgba(0,0,0,.075));pointer-events:none"></div>
</body></html>
